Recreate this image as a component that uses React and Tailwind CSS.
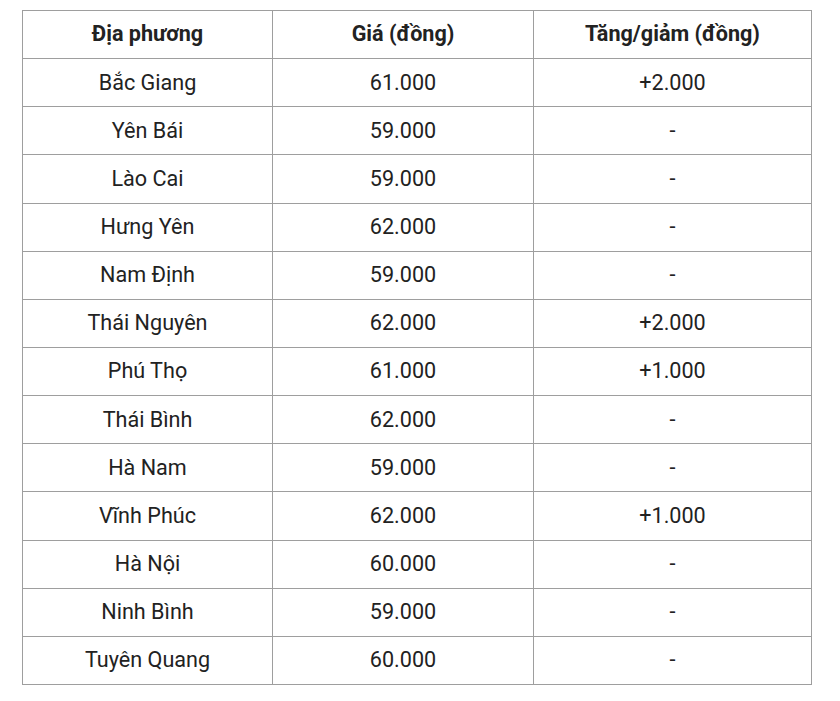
const rows = [
  ["Bắc Giang", "61.000", "+2.000"],
  ["Yên Bái", "59.000", "-"],
  ["Lào Cai", "59.000", "-"],
  ["Hưng Yên", "62.000", "-"],
  ["Nam Định", "59.000", "-"],
  ["Thái Nguyên", "62.000", "+2.000"],
  ["Phú Thọ", "61.000", "+1.000"],
  ["Thái Bình", "62.000", "-"],
  ["Hà Nam", "59.000", "-"],
  ["Vĩnh Phúc", "62.000", "+1.000"],
  ["Hà Nội", "60.000", "-"],
  ["Ninh Bình", "59.000", "-"],
  ["Tuyên Quang", "60.000", "-"],
];

function App() {
  return (
    <div className="bg-white min-h-[701px] pt-[10px] pl-[22px]" style={{ fontFamily: "Roboto, 'Liberation Sans', sans-serif" }}>
      <table className="w-[789px] border-collapse text-[21.6px] text-[#222] table-fixed">
        <colgroup>
          <col className="w-[250px]" />
          <col className="w-[261px]" />
          <col className="w-[278px]" />
        </colgroup>
        <thead>
          <tr className="h-[48.15px]">
            <th className="border border-[#9e9e9e] font-bold text-center">Địa phương</th>
            <th className="border border-[#9e9e9e] font-bold text-center">Giá (đồng)</th>
            <th className="border border-[#9e9e9e] font-bold text-center">Tăng/giảm (đồng)</th>
          </tr>
        </thead>
        <tbody>
          {rows.map((r) => (
            <tr key={r[0]} className="h-[48.15px]">
              <td className="border border-[#9e9e9e] text-center">{r[0]}</td>
              <td className="border border-[#9e9e9e] text-center">{r[1]}</td>
              <td className="border border-[#9e9e9e] text-center">{r[2]}</td>
            </tr>
          ))}
        </tbody>
      </table>
    </div>
  );
}

export default App;
